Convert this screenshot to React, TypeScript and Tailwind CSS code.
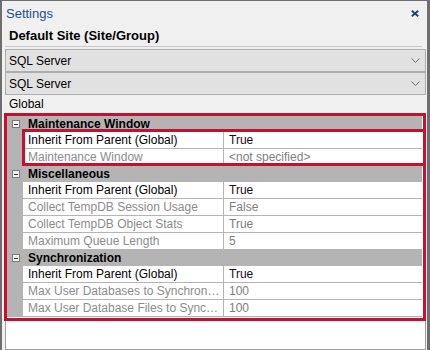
import React from 'react';

type Row = { name: string; value: string; active?: boolean };
type Section = { title: string; rows: Row[] };

const sections: Section[] = [
  {
    title: 'Maintenance Window',
    rows: [
      { name: 'Inherit From Parent (Global)', value: 'True', active: true },
      { name: 'Maintenance Window', value: '<not specified>' },
    ],
  },
  {
    title: 'Miscellaneous',
    rows: [
      { name: 'Inherit From Parent (Global)', value: 'True', active: true },
      { name: 'Collect TempDB Session Usage', value: 'False' },
      { name: 'Collect TempDB Object Stats', value: 'True' },
      { name: 'Maximum Queue Length', value: '5' },
    ],
  },
  {
    title: 'Synchronization',
    rows: [
      { name: 'Inherit From Parent (Global)', value: 'True', active: true },
      { name: 'Max User Databases to Synchronize', value: '100' },
      { name: 'Max User Database Files to Synchronize', value: '100' },
    ],
  },
];

function Chevron() {
  return (
    <svg width="9" height="5" viewBox="0 0 9 5" className="mr-[5px]">
      <path d="M0.5 0.5 L4.5 4.5 L8.5 0.5" fill="none" stroke="#6a6a6a" strokeWidth="1" />
    </svg>
  );
}

function Dropdown({ label }: { label: string }) {
  return (
    <div className="h-[23px] flex items-center justify-between bg-[#e1e1e1] border border-[#adadad] pl-[3px]">
      <span>{label}</span>
      <Chevron />
    </div>
  );
}

function MinusBox() {
  return (
    <div className="w-[8px] h-[8px] border border-[#7a7a7a] bg-[#f4f4f4] flex items-center justify-center">
      <div className="w-[4px] h-px bg-[#333]" />
    </div>
  );
}

export default function App() {
  return (
    <div className="relative w-[430px] h-[350px] flex bg-[#f0f0f0] text-[12px] text-black font-['Liberation_Sans',Arial,sans-serif] overflow-hidden">
      <div className="flex-1 flex flex-col border-l-2 border-t border-[#6e6e6e] pl-[3px] pr-[1px]">
        <div className="h-[25px] flex items-center justify-between">
          <span className="text-[13px] text-[#1d4f8f] ml-[1px]">Settings</span>
          <svg width="8" height="7" viewBox="0 0 8 7" className="mr-[7px]">
            <path d="M0.8 0.8 L7.2 6.2 M7.2 0.8 L0.8 6.2" stroke="#1e3f74" strokeWidth="1.9" />
          </svg>
        </div>
        <div className="h-[20px] flex items-center pl-[4px] text-[13px] font-bold">Default Site (Site/Group)</div>
        <div className="h-px bg-[#c8c8c8] mr-[4px]" />
        <div className="h-[2px]" />
        <Dropdown label="SQL Server" />
        <Dropdown label="SQL Server" />
        <div className="h-[18px] flex items-center pl-[4px]">Global</div>
        <div className="flex-1 bg-white border border-[#a0a0a0] pt-[2px] pl-px pr-[3px]">
          {sections.map((s) => (
            <div key={s.title}>
              <div className="h-[16px] flex items-center bg-[#b4b4b4]">
                <div className="w-[16px] flex justify-center pl-px">
                  <MinusBox />
                </div>
                <span className="pl-[5px] font-bold">{s.title}</span>
              </div>
              {s.rows.map((r, i) => (
                <div key={i} className="h-[17px] flex">
                  <div className="w-[16px] shrink-0 bg-[#b4b4b4]" />
                  <div
                    className={`w-[201px] shrink-0 border-b border-r border-[#b4b4b4] pl-[5px] pr-px leading-[16px] truncate ${
                      r.active ? 'text-black' : 'text-[#8c8c8c]'
                    }`}
                  >
                    {r.name}
                  </div>
                  <div
                    className={`flex-1 border-b border-[#b4b4b4] pl-[5px] leading-[16px] ${
                      r.active ? 'text-[#1a0a1a]' : 'text-[#7e7e7e]'
                    }`}
                  >
                    {r.value}
                  </div>
                </div>
              ))}
            </div>
          ))}
        </div>
      </div>
      <div className="w-[3px] bg-[#6e6e6e]" />
      <div className="absolute left-[4px] top-[113px] w-[422px] h-[208px] border-[3px] border-[#c8102e]" />
      <div className="absolute left-[22px] top-[129px] w-[404px] h-[37px] border-[3px] border-[#c8102e]" />
    </div>
  );
}
